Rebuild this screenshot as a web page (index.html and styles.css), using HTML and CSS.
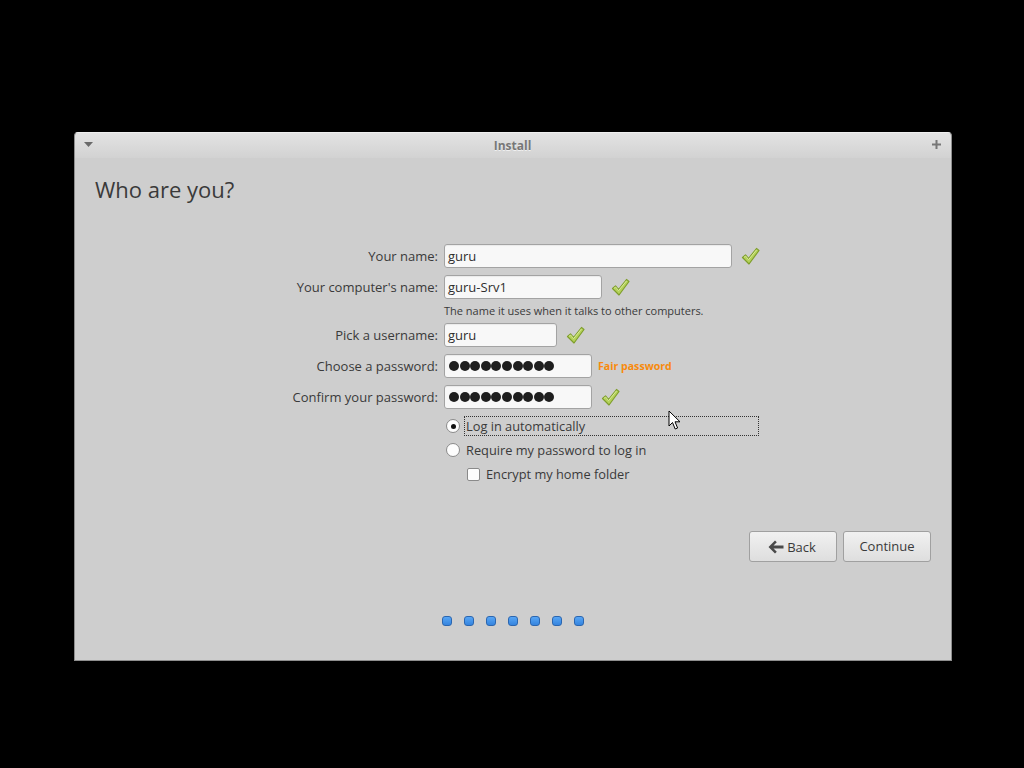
FILE: index.html
```html
<!DOCTYPE html>
<html>
<head>
<meta charset="utf-8">
<link rel="stylesheet" href="styles.css">
</head>
<body>
<div class="window">
  <div class="titlebar">
    <svg class="tb-menu" width="9" height="6" viewBox="0 0 9 6"><path d="M0 0H9L4.5 5Z" fill="#6a6a6a"/></svg>
    <span class="tb-title">Install</span>
    <svg class="tb-max" width="9" height="9" viewBox="0 0 9 9"><path d="M3.5 0H5.5V3.5H9V5.5H5.5V9H3.5V5.5H0V3.5H3.5Z" fill="#777"/></svg>
  </div>
  <div class="content">
    <h1 class="heading">Who are you?</h1>
    <div class="form">
      <label class="lbl">Your name:</label>
      <div class="field">
        <div class="input w-name">guru</div>
        <svg class="check" viewBox="0 0 20 20"><path d="M2.5 11.5L5.5 9L8.5 12.5L16.5 2.5L19 4.5L9 18Z" fill="#b5d25a" stroke="#7f9e2c" stroke-width="1.2" stroke-linejoin="round"/><path d="M4 11.3L5.6 10L8.6 13.6L16.6 3.8" fill="none" stroke="#d9ec98" stroke-width="1"/></svg>
      </div>
      <label class="lbl">Your computer's name:</label>
      <div class="field">
        <div class="input w-comp">guru-Srv1</div>
        <svg class="check" viewBox="0 0 20 20"><path d="M2.5 11.5L5.5 9L8.5 12.5L16.5 2.5L19 4.5L9 18Z" fill="#b5d25a" stroke="#7f9e2c" stroke-width="1.2" stroke-linejoin="round"/><path d="M4 11.3L5.6 10L8.6 13.6L16.6 3.8" fill="none" stroke="#d9ec98" stroke-width="1"/></svg>
      </div>
      <div></div>
      <div class="hint">The name it uses when it talks to other computers.</div>
      <label class="lbl">Pick a username:</label>
      <div class="field">
        <div class="input w-user">guru</div>
        <svg class="check" viewBox="0 0 20 20"><path d="M2.5 11.5L5.5 9L8.5 12.5L16.5 2.5L19 4.5L9 18Z" fill="#b5d25a" stroke="#7f9e2c" stroke-width="1.2" stroke-linejoin="round"/><path d="M4 11.3L5.6 10L8.6 13.6L16.6 3.8" fill="none" stroke="#d9ec98" stroke-width="1"/></svg>
      </div>
      <label class="lbl">Choose a password:</label>
      <div class="field">
        <div class="input w-pass"><span class="dots"><i></i><i></i><i></i><i></i><i></i><i></i><i></i><i></i><i></i><i></i></span></div>
        <span class="strength">Fair password</span>
      </div>
      <label class="lbl">Confirm your password:</label>
      <div class="field">
        <div class="input w-pass"><span class="dots"><i></i><i></i><i></i><i></i><i></i><i></i><i></i><i></i><i></i><i></i></span></div>
        <svg class="check" viewBox="0 0 20 20"><path d="M2.5 11.5L5.5 9L8.5 12.5L16.5 2.5L19 4.5L9 18Z" fill="#b5d25a" stroke="#7f9e2c" stroke-width="1.2" stroke-linejoin="round"/><path d="M4 11.3L5.6 10L8.6 13.6L16.6 3.8" fill="none" stroke="#d9ec98" stroke-width="1"/></svg>
      </div>
      <div></div>
      <div class="options">
        <div class="opt focus"><span class="radio on"></span><span class="opt-text">Log in automatically</span></div>
        <div class="opt"><span class="radio"></span><span class="opt-text">Require my password to log in</span></div>
        <div class="opt sub"><span class="checkbox"></span><span class="opt-text">Encrypt my home folder</span></div>
      </div>
    </div>
    <div class="buttons">
      <button class="btn btn-back"><svg width="16" height="14" viewBox="0 0 16 14"><path d="M7 0.5L8.8 2.3L5.5 5.6H15.5V8.4H5.5L8.8 11.7L7 13.5L0.5 7Z" fill="#4a4a4a"/></svg>Back</button>
      <button class="btn btn-continue">Continue</button>
    </div>
    <div class="progress">
      <span class="dot"></span><span class="dot"></span><span class="dot"></span><span class="dot"></span><span class="dot"></span><span class="dot"></span><span class="dot"></span>
    </div>
  </div>
</div>
<svg class="cursor" width="14" height="21" viewBox="0 0 14 21"><path d="M1 1V16L4.5 12.5L7.2 19L9.6 18L7 11.8H12Z" fill="#fff" stroke="#000" stroke-width="1" stroke-linejoin="miter"/></svg>
</body>
</html>
```
FILE: styles.css
```css
html, body {
  margin: 0;
  padding: 0;
  background: #000;
  width: 1024px;
  height: 768px;
  overflow: hidden;
  font-family: "Open Sans", "DejaVu Sans", sans-serif;
}

.window {
  position: relative;
  margin: 132px 0 0 74px;
  width: 878px;
  height: 529px;
  box-sizing: border-box;
  background: #cecece;
  border: 1px solid #8e8e8e;
  border-top-color: #efefef;
  border-radius: 4px 4px 0 0;
  display: flex;
  flex-direction: column;
}

.titlebar {
  height: 25px;
  background: linear-gradient(#e3e3e3, #d2d2d2);
  border-radius: 4px 4px 0 0;
  display: flex;
  align-items: center;
  justify-content: space-between;
  padding: 0 10px 0 9px;
}

.tb-title {
  font-size: 12px;
  font-weight: bold;
  color: #777;
  text-shadow: 0 1px 0 #f0f0f0;
  margin-left: 0;
}

.tb-max { margin-top: -2px; }
.tb-menu { margin-top: -2px; }

.content {
  flex: 1;
  display: flex;
  flex-direction: column;
  padding: 0 20px 0 20px;
}

.heading {
  margin: 16px 0 0 0;
  font-size: 22px;
  font-weight: normal;
  line-height: 30px;
  color: #3a3a3a;
}

.form {
  display: grid;
  grid-template-columns: 244px auto;
  column-gap: 6px;
  row-gap: 7px;
  margin: 40px 0 0 99px;
  align-items: center;
}

.lbl {
  justify-self: end;
  font-size: 13px;
  color: #3a3a3a;
  line-height: 24px;
}

.field {
  display: flex;
  align-items: center;
  height: 24px;
}

.input {
  height: 24px;
  box-sizing: border-box;
  background: #f8f8f8;
  border: 1px solid #a3a3a3;
  border-radius: 3px;
  padding: 0 3px;
  font-size: 13px;
  line-height: 22px;
  color: #2e2e2e;
  display: flex;
  align-items: center;
  box-shadow: inset 0 1px 1px rgba(0,0,0,0.06);
}

.w-name { width: 288px; }
.w-comp { width: 158px; }
.w-user { width: 113px; }
.w-pass { width: 148px; }

.check {
  width: 20px;
  height: 20px;
  margin-left: 8px;
}

.hint {
  font-size: 11px;
  line-height: 11px;
  color: #3a3a3a;
  margin: -1px 0 0 0;
}

.dots {
  display: flex;
  gap: 0.6px;
  margin-left: 1px;
}
.dots i {
  display: block;
  width: 10px;
  height: 10px;
  border-radius: 50%;
  background: #1e1e1e;
}

.strength {
  margin-left: 6px;
  font-size: 10.6px;
  font-weight: bold;
  color: #f88a0c;
}

.options {
  display: flex;
  flex-direction: column;
  gap: 4px;
  margin-top: 0;
}

.opt {
  display: flex;
  align-items: center;
  height: 20px;
  font-size: 12.8px;
  color: #3a3a3a;
}

.opt-text {
  box-sizing: border-box;
  height: 20px;
  line-height: 18px;
  padding: 0 0 0 1px;
  border: 1px solid transparent;
}

.focus .opt-text {
  border: 1px dotted #333;
  width: 295px;
}

.radio {
  width: 12px;
  height: 12px;
  border-radius: 50%;
  border: 1px solid #8a8a8a;
  background: #fdfdfd;
  margin: 0 4px 0 2px;
  position: relative;
  box-sizing: content-box;
}
.radio.on::after {
  content: "";
  position: absolute;
  left: 3.5px;
  top: 3.5px;
  width: 5px;
  height: 5px;
  border-radius: 50%;
  background: #111;
}

.sub { padding-left: 21px; }

.checkbox {
  width: 11px;
  height: 11px;
  border: 1px solid #8a8a8a;
  border-radius: 2px;
  background: #fdfdfd;
  margin: 0 4px 0 2px;
}

.buttons {
  display: flex;
  justify-content: flex-end;
  gap: 6px;
  margin-top: 47px;
}

.btn {
  height: 31px;
  box-sizing: border-box;
  border: 1px solid #a0a0a0;
  border-radius: 3px;
  background: linear-gradient(#f1f1f1, #dedede);
  font-family: "Open Sans", "DejaVu Sans", sans-serif;
  font-size: 13px;
  color: #3a3a3a;
  display: flex;
  align-items: center;
  justify-content: center;
  padding: 0;
}

.btn-back { width: 88px; gap: 3px; padding-top: 1px; }
.btn-back svg { margin-left: -2px; }
.btn-continue { width: 88px; padding-bottom: 1px; }

.progress {
  display: flex;
  justify-content: center;
  gap: 12px;
  margin-top: 54px;
  margin-left: 0;
}

.dot {
  width: 10px;
  height: 10px;
  box-sizing: border-box;
  border-radius: 3px;
  background: linear-gradient(#58a6f5, #3584de);
  border: 1px solid #2b66b0;
}

.cursor {
  position: absolute;
  left: 668px;
  top: 410px;
}
```
